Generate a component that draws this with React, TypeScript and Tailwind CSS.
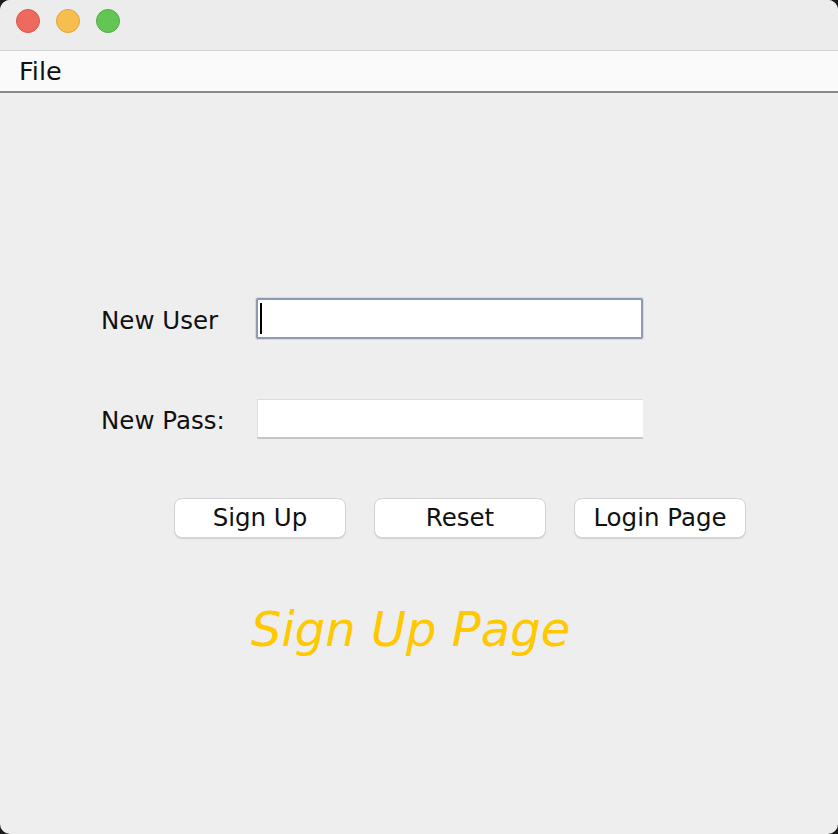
const FONT = { fontFamily: '"DejaVu Sans", "Liberation Sans", sans-serif' }

function TrafficLights() {
  return (
    <div className="flex items-center gap-[16px] pl-[16px] pt-[9px]">
      <span className="h-[24px] w-[24px] rounded-full border border-[#d9564b] bg-[#ee6a5f]" />
      <span className="h-[24px] w-[24px] rounded-full border border-[#dea33a] bg-[#f5be4f]" />
      <span className="h-[24px] w-[24px] rounded-full border border-[#52ab45] bg-[#62c554]" />
    </div>
  )
}

function PushButton({ label }: { label: string }) {
  return (
    <button className="flex h-[40px] w-[172px] items-center justify-center rounded-[8px] border border-[#d4d4d4] bg-white text-[24.5px] leading-none text-[#111] shadow-[0_1px_1px_rgba(0,0,0,0.12)]">
      {label}
    </button>
  )
}

export default function App() {
  return (
    <div className="h-[834px] w-[838px] bg-[#1c1c1c]" style={FONT}>
      <div className="flex h-full w-full flex-col overflow-hidden rounded-[10px] bg-[#eeeeee]">
        <div className="h-[51px] shrink-0 border-b border-[#d5d5d5] bg-[#ececec]">
          <TrafficLights />
        </div>
        <div className="flex h-[42px] shrink-0 items-center border-b-2 border-[#8a8a8a] bg-[#fafafa] pl-[19px] pt-[2px]">
          <span className="text-[25.5px] leading-none text-[#111]">File</span>
        </div>

        <div className="flex flex-1 flex-col pt-[205px]">
          <div className="grid grid-cols-[155px_387px] items-center gap-y-[60px] pl-[101px]">
            <span className="block pt-[5px] text-[24.5px] leading-none text-[#111]">New User</span>
            <div className="flex h-[41px] items-center rounded-[2px] border-2 border-[#8e9cb2] bg-white pl-[2px] shadow-[0_0_0_1px_rgba(160,180,210,0.35)]">
              <span className="h-[31px] w-[2px] bg-black" />
            </div>

            <span className="block pt-[5px] text-[24.5px] leading-none text-[#111]">New Pass:</span>
            <div className="ml-[1px] h-[40px] border-t border-l border-b-2 border-t-[#dddddd] border-l-[#dddddd] border-b-[#c6c6c6] bg-white" />
          </div>

          <div className="mt-[59px] flex gap-[28px] pl-[174px]">
            <PushButton label="Sign Up" />
            <PushButton label="Reset" />
            <PushButton label="Login Page" />
          </div>

          <div className="mt-[67px] pl-[251px]">
            <span className="text-[48px] italic leading-none text-[#ffc800]">Sign Up Page</span>
          </div>
        </div>
      </div>
    </div>
  )
}
